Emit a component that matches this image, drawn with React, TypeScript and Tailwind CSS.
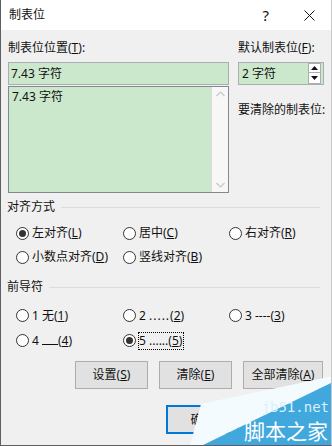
import type { ReactNode } from 'react';

function Radio({ checked, focus, children }: { checked?: boolean; focus?: boolean; children: ReactNode }) {
  return (
    <div className="flex items-center">
      <span className="w-[13px] h-[13px] rounded-full border border-[#333] bg-white flex items-center justify-center shrink-0">
        {checked && <span className="w-[7px] h-[7px] rounded-full bg-[#333]" />}
      </span>
      {focus ? (
        <span className="ml-[2px] border border-dotted border-black leading-[16px] pr-[1px] whitespace-nowrap">{children}</span>
      ) : (
        <span className="ml-[3px] leading-[16px] whitespace-nowrap">{children}</span>
      )}
    </div>
  );
}

function GroupLabel({ text }: { text: string }) {
  return (
    <div className="flex items-center h-[16px] pr-[5px]">
      <span className="leading-[16px]">{text}</span>
      <span className="flex-1 h-px bg-[#dcdcdc] ml-[6px]" />
    </div>
  );
}

function Button({ children, className }: { children: ReactNode; className: string }) {
  return (
    <div className={'h-[28px] bg-[#e1e1e1] border border-[#adadad] flex items-center justify-center ' + className}>
      {children}
    </div>
  );
}

export default function App() {
  return (
    <div className="w-[332px] h-[446px] bg-[#f0f0f0] relative overflow-hidden flex flex-col text-[12px] text-[#111] font-[Noto_Sans,Noto_Sans_CJK_SC,sans-serif] border-l border-b border-[#5f5f5f] border-r border-r-[#c8c8c8]">
      {/* title bar */}
      <div className="h-[30px] bg-white flex items-center pl-[8px] shrink-0">
        <span className="leading-[16px]">制表位</span>
        <span className="ml-auto text-[15px] leading-[16px] mr-[35px]">?</span>
        <svg width="11" height="11" viewBox="0 0 11 11" className="mr-[16px]">
          <path d="M0.5 0.5 L10.5 10.5 M10.5 0.5 L0.5 10.5" stroke="#111" strokeWidth="1" />
        </svg>
      </div>

      <div className="flex flex-col px-[6px]">
        {/* top section */}
        <div className="flex mt-[10px] pl-[1px]">
          <div className="w-[221px] flex flex-col">
            <div className="leading-[16px]">制表位位置(<u>T</u>):</div>
            <div className="mt-[6px] h-[23px] border border-[#abadb3] bg-[#cce8cc] flex items-center pl-[2px]">7.43 字符</div>
            <div className="mt-[1px] h-[107px] border border-[#828790] bg-[#cce8cc] flex">
              <div className="flex-1 pl-[3px] pt-[2px] leading-[16px]">7.43 字符</div>
              <div className="w-[17px] bg-[#f7f7f7] border-l border-[#dcdcdc] flex flex-col items-center justify-between py-[4px]">
                <svg width="9" height="6" viewBox="0 0 9 6">
                  <path d="M0.5 5 L4.5 1 L8.5 5" stroke="#c8c8c8" strokeWidth="1.2" fill="none" />
                </svg>
                <svg width="9" height="6" viewBox="0 0 9 6">
                  <path d="M0.5 1 L4.5 5 L8.5 1" stroke="#c8c8c8" strokeWidth="1.2" fill="none" />
                </svg>
              </div>
            </div>
          </div>
          <div className="w-[86px] ml-[9px] flex flex-col">
            <div className="leading-[16px] whitespace-nowrap">默认制表位(<u>F</u>):</div>
            <div className="mt-[6px] h-[23px] border border-[#abadb3] bg-[#cce8cc] flex items-center">
              <span className="pl-[3px] flex-1">2 字符</span>
              <div className="w-[13px] h-[21px] mr-[2px] flex flex-col bg-white">
                <div className="h-[10px] border border-[#adadad] flex items-center justify-center">
                  <svg width="7" height="4" viewBox="0 0 7 4"><path d="M0 4 L3.5 0 L7 4 Z" fill="#111" /></svg>
                </div>
                <div className="h-[11px] border border-t-0 border-[#adadad] flex items-center justify-center">
                  <svg width="7" height="4" viewBox="0 0 7 4"><path d="M0 0 L3.5 4 L7 0 Z" fill="#111" /></svg>
                </div>
              </div>
            </div>
            <div className="mt-[17px] leading-[16px] whitespace-nowrap">要清除的制表位:</div>
          </div>
        </div>

        {/* alignment */}
        <div className="mt-[6px]">
          <GroupLabel text="对齐方式" />
        </div>
        <div className="grid grid-cols-[107px_106px_1fr] pl-[9px] mt-[6px]">
          <div className="h-[24px] flex items-center"><Radio checked>左对齐(<u>L</u>)</Radio></div>
          <div className="h-[24px] flex items-center"><Radio>居中(<u>C</u>)</Radio></div>
          <div className="h-[24px] flex items-center"><Radio>右对齐(<u>R</u>)</Radio></div>
          <div className="h-[24px] flex items-center"><Radio>小数点对齐(<u>D</u>)</Radio></div>
          <div className="h-[24px] flex items-center"><Radio>竖线对齐(<u>B</u>)</Radio></div>
        </div>

        {/* leader */}
        <div className="mt-[10px]">
          <GroupLabel text="前导符" />
        </div>
        <div className="grid grid-cols-[107px_106px_1fr] pl-[9px] mt-[8px]">
          <div className="h-[25px] flex items-center"><Radio>1 无(<u>1</u>)</Radio></div>
          <div className="h-[25px] flex items-center"><Radio>2 <span className="tracking-[1px]">.....</span>(<u>2</u>)</Radio></div>
          <div className="h-[25px] flex items-center"><Radio>3 ----(<u>3</u>)</Radio></div>
          <div className="h-[25px] flex items-center"><Radio>4 <span className="inline-block w-[16px] h-[11px] border-b border-[#111] align-baseline" />(<u>4</u>)</Radio></div>
          <div className="h-[25px] flex items-center"><Radio checked focus>5 ......(<u>5</u>)</Radio></div>
        </div>

        {/* buttons */}
        <div className="flex mt-[8px] pl-[68px] gap-[11px]">
          <Button className="w-[73px]">设置(<u>S</u>)</Button>
          <Button className="w-[73px]">清除(<u>E</u>)</Button>
          <Button className="w-[80px]">全部清除(<u>A</u>)</Button>
        </div>
        <div className="flex mt-[16px] pl-[159px] gap-[4px]">
          <div className="w-[73px] h-[29px] bg-[#e1e1e1] border-2 border-[#0078d7] flex items-center justify-center">确定</div>
          <div className="w-[80px] h-[29px] bg-[#e1e1e1] border border-[#adadad]" />
        </div>
      </div>

      {/* watermark */}
      <svg className="absolute left-0 top-0 pointer-events-none" width="332" height="446" viewBox="0 0 332 446">
        <polygon points="189,446 200,404 332,376 332,382 200,446" fill="#f4fbfe" />
        <polygon points="200,446 332,382 332,446" fill="#41a8dd" />
      </svg>
      <div className="absolute right-[2px] top-[400px] text-[14px] leading-[14px] text-[#d8f0fb] font-[DejaVu_Sans_Mono,monospace]">jb51.net</div>
      <div className="absolute right-[3px] top-[419px] text-[21px] leading-[22px] text-white font-[Noto_Sans_CJK_SC,sans-serif]">脚本之家</div>
    </div>
  );
}
